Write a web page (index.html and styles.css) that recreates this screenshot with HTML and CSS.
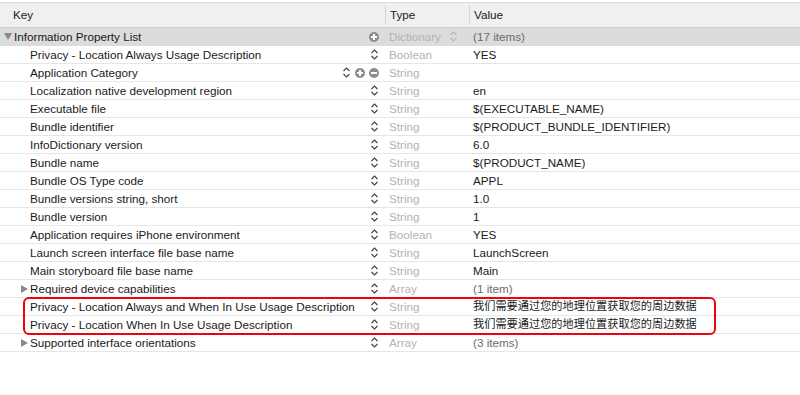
FILE: index.html
```html
<!DOCTYPE html>
<html lang="en">
<head>
  <meta charset="UTF-8">
  <title>Info.plist</title>
  <link rel="stylesheet" href="styles.css">
</head>
<body>
  <div class="plist">
    <div class="plist-header">
      <div class="col key">Key</div>
      <div class="col type">Type</div>
      <div class="col value">Value</div>
    </div>

    <div class="rows">
      <div class="row selected">
        <div class="col key root">
          <span class="disclosure open"></span>
          <span class="label">Information Property List</span>
          <span class="controls"><span class="btn plus"></span></span>
        </div>
        <div class="col type">Dictionary <svg class="stepper faint" viewBox="0 0 9 13"><path d="M1.5 5 L4.5 2 L7.5 5 M1.5 8 L4.5 11 L7.5 8"/></svg></div>
        <div class="col value muted">(17 items)</div>
      </div>

      <div class="row">
        <div class="col key child"><span class="label">Privacy - Location Always Usage Description</span><span class="controls"><svg class="stepper" viewBox="0 0 9 13"><path d="M1.5 5 L4.5 2 L7.5 5 M1.5 8 L4.5 11 L7.5 8"/></svg></span></div>
        <div class="col type">Boolean</div>
        <div class="col value">YES</div>
      </div>

      <div class="row">
        <div class="col key child"><span class="label">Application Category</span><span class="controls"><svg class="stepper" viewBox="0 0 9 13"><path d="M1.5 5 L4.5 2 L7.5 5 M1.5 8 L4.5 11 L7.5 8"/></svg><span class="btn plus"></span><span class="btn minus"></span></span></div>
        <div class="col type">String</div>
        <div class="col value"></div>
      </div>

      <div class="row">
        <div class="col key child"><span class="label">Localization native development region</span><span class="controls"><svg class="stepper" viewBox="0 0 9 13"><path d="M1.5 5 L4.5 2 L7.5 5 M1.5 8 L4.5 11 L7.5 8"/></svg></span></div>
        <div class="col type">String</div>
        <div class="col value">en</div>
      </div>

      <div class="row">
        <div class="col key child"><span class="label">Executable file</span><span class="controls"><svg class="stepper" viewBox="0 0 9 13"><path d="M1.5 5 L4.5 2 L7.5 5 M1.5 8 L4.5 11 L7.5 8"/></svg></span></div>
        <div class="col type">String</div>
        <div class="col value">$(EXECUTABLE_NAME)</div>
      </div>

      <div class="row">
        <div class="col key child"><span class="label">Bundle identifier</span><span class="controls"><svg class="stepper" viewBox="0 0 9 13"><path d="M1.5 5 L4.5 2 L7.5 5 M1.5 8 L4.5 11 L7.5 8"/></svg></span></div>
        <div class="col type">String</div>
        <div class="col value">$(PRODUCT_BUNDLE_IDENTIFIER)</div>
      </div>

      <div class="row">
        <div class="col key child"><span class="label">InfoDictionary version</span><span class="controls"><svg class="stepper" viewBox="0 0 9 13"><path d="M1.5 5 L4.5 2 L7.5 5 M1.5 8 L4.5 11 L7.5 8"/></svg></span></div>
        <div class="col type">String</div>
        <div class="col value">6.0</div>
      </div>

      <div class="row">
        <div class="col key child"><span class="label">Bundle name</span><span class="controls"><svg class="stepper" viewBox="0 0 9 13"><path d="M1.5 5 L4.5 2 L7.5 5 M1.5 8 L4.5 11 L7.5 8"/></svg></span></div>
        <div class="col type">String</div>
        <div class="col value">$(PRODUCT_NAME)</div>
      </div>

      <div class="row">
        <div class="col key child"><span class="label">Bundle OS Type code</span><span class="controls"><svg class="stepper" viewBox="0 0 9 13"><path d="M1.5 5 L4.5 2 L7.5 5 M1.5 8 L4.5 11 L7.5 8"/></svg></span></div>
        <div class="col type">String</div>
        <div class="col value">APPL</div>
      </div>

      <div class="row">
        <div class="col key child"><span class="label">Bundle versions string, short</span><span class="controls"><svg class="stepper" viewBox="0 0 9 13"><path d="M1.5 5 L4.5 2 L7.5 5 M1.5 8 L4.5 11 L7.5 8"/></svg></span></div>
        <div class="col type">String</div>
        <div class="col value">1.0</div>
      </div>

      <div class="row">
        <div class="col key child"><span class="label">Bundle version</span><span class="controls"><svg class="stepper" viewBox="0 0 9 13"><path d="M1.5 5 L4.5 2 L7.5 5 M1.5 8 L4.5 11 L7.5 8"/></svg></span></div>
        <div class="col type">String</div>
        <div class="col value">1</div>
      </div>

      <div class="row">
        <div class="col key child"><span class="label">Application requires iPhone environment</span><span class="controls"><svg class="stepper" viewBox="0 0 9 13"><path d="M1.5 5 L4.5 2 L7.5 5 M1.5 8 L4.5 11 L7.5 8"/></svg></span></div>
        <div class="col type">Boolean</div>
        <div class="col value">YES</div>
      </div>

      <div class="row">
        <div class="col key child"><span class="label">Launch screen interface file base name</span><span class="controls"><svg class="stepper" viewBox="0 0 9 13"><path d="M1.5 5 L4.5 2 L7.5 5 M1.5 8 L4.5 11 L7.5 8"/></svg></span></div>
        <div class="col type">String</div>
        <div class="col value">LaunchScreen</div>
      </div>

      <div class="row">
        <div class="col key child"><span class="label">Main storyboard file base name</span><span class="controls"><svg class="stepper" viewBox="0 0 9 13"><path d="M1.5 5 L4.5 2 L7.5 5 M1.5 8 L4.5 11 L7.5 8"/></svg></span></div>
        <div class="col type">String</div>
        <div class="col value">Main</div>
      </div>

      <div class="row">
        <div class="col key child group"><span class="disclosure"></span><span class="label">Required device capabilities</span><span class="controls"><svg class="stepper" viewBox="0 0 9 13"><path d="M1.5 5 L4.5 2 L7.5 5 M1.5 8 L4.5 11 L7.5 8"/></svg></span></div>
        <div class="col type">Array</div>
        <div class="col value muted">(1 item)</div>
      </div>

      <div class="row">
        <div class="col key child"><span class="label">Privacy - Location Always and When In Use Usage Description</span><span class="controls"><svg class="stepper" viewBox="0 0 9 13"><path d="M1.5 5 L4.5 2 L7.5 5 M1.5 8 L4.5 11 L7.5 8"/></svg></span></div>
        <div class="col type">String</div>
        <div class="col value cjk">我们需要通过您的地理位置获取您的周边数据</div>
      </div>

      <div class="row">
        <div class="col key child"><span class="label">Privacy - Location When In Use Usage Description</span><span class="controls"><svg class="stepper" viewBox="0 0 9 13"><path d="M1.5 5 L4.5 2 L7.5 5 M1.5 8 L4.5 11 L7.5 8"/></svg></span></div>
        <div class="col type">String</div>
        <div class="col value cjk">我们需要通过您的地理位置获取您的周边数据</div>
      </div>

      <div class="row">
        <div class="col key child group"><span class="disclosure"></span><span class="label">Supported interface orientations</span><span class="controls"><svg class="stepper" viewBox="0 0 9 13"><path d="M1.5 5 L4.5 2 L7.5 5 M1.5 8 L4.5 11 L7.5 8"/></svg></span></div>
        <div class="col type">Array</div>
        <div class="col value muted">(3 items)</div>
      </div>

      <!-- annotation drawn over the two privacy rows -->
      <div class="highlight"></div>
    </div>
  </div>
</body>
</html>
```

FILE: styles.css
```css
body {
  margin: 0;
  background: #fff;
  font-family: "Liberation Sans", Arial, sans-serif;
  font-size: 11.7px;
  color: #1a1a1a;
}

.plist {
  width: 800px;
  padding-top: 2px;
}

.plist-header {
  display: grid;
  grid-template-columns: 385px 84px 1fr;
  height: 24px;
  background: #f0f0f0;
  border-top: 1px solid #dadada;
  border-bottom: 1px solid #d0d0d0;
  align-items: center;
}

.plist-header .col {
  height: 20px;
  line-height: 20px;
}

.plist-header .key {
  padding-left: 13px;
}

.plist-header .type,
.plist-header .value {
  border-left: 1px solid #d6d6d6;
  padding-left: 4px;
}

.rows {
  position: relative;
}

.row {
  display: grid;
  grid-template-columns: 385px 84px 1fr;
  height: 17px;
  line-height: 17px;
  border-bottom: 1px solid #e6e6e6;
  white-space: nowrap;
}

.row.selected {
  background: #dcdcdc;
  border-bottom-color: #dcdcdc;
}

.row .key {
  display: flex;
  align-items: center;
}

.row .key.root {
  padding-left: 4px;
}

.row .key.child {
  padding-left: 30px;
}

.row .key.group {
  padding-left: 21px;
}

.label {
  flex: 1;
  overflow: hidden;
}

.disclosure {
  width: 0;
  height: 0;
  margin-right: 2px;
  border-top: 4px solid transparent;
  border-bottom: 4px solid transparent;
  border-left: 7px solid #8a8a8a;
}

.disclosure.open {
  border-left: 4px solid transparent;
  border-right: 4px solid transparent;
  border-top: 7px solid #8a8a8a;
  border-bottom: 0;
  margin-right: 2px;
}

.controls {
  display: flex;
  align-items: center;
  gap: 4px;
  padding-right: 6px;
}

.stepper {
  width: 9px;
  height: 13px;
  fill: none;
  stroke: #444;
  stroke-width: 1.2;
}

.stepper.faint {
  stroke: #b9b9b9;
  margin-left: 8px;
  vertical-align: middle;
}

.btn {
  position: relative;
  width: 10px;
  height: 10px;
  border-radius: 50%;
  background: #8d8d8d;
}

.btn::before,
.btn::after {
  content: "";
  position: absolute;
  background: #fff;
  left: 2px;
  top: 4px;
  width: 6px;
  height: 2px;
}

.btn.plus::after {
  left: 4px;
  top: 2px;
  width: 2px;
  height: 6px;
}

.btn.minus::after {
  display: none;
}

.row .type {
  padding-left: 4px;
  color: #b3b3b3;
  display: flex;
  align-items: center;
}

.row .value {
  padding-left: 4px;
}

.row .value.muted {
  color: #6b6b6b;
}

.cjk {
  font-family: "Liberation Sans", "Noto Sans CJK SC", sans-serif;
  font-size: 11.2px;
}

.highlight {
  position: absolute;
  box-sizing: border-box;
  left: 23px;
  top: 269px;
  width: 693px;
  height: 38px;
  border: 2.5px solid #f2000c;
  border-radius: 6px;
}
```
